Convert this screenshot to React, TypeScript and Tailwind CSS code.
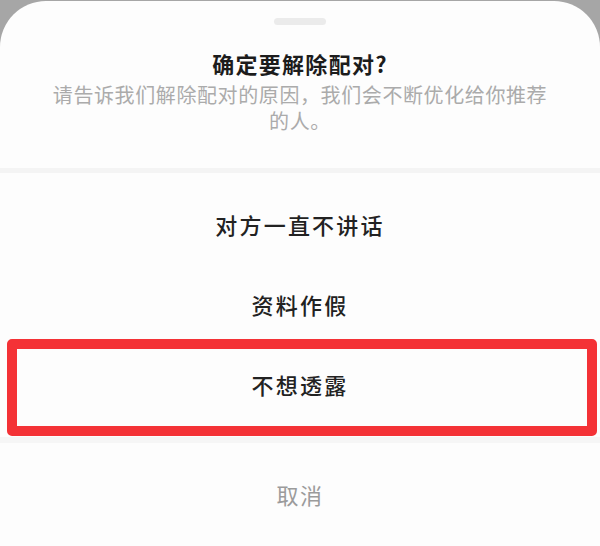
const reasons = ["对方一直不讲话", "资料作假", "不想透露"];

export default function App() {
  return (
    <div
      className="h-[546px] w-[600px] overflow-hidden bg-[#a6a6a6] pt-px"
      style={{ fontFamily: '"Noto Sans CJK SC", "Noto Sans", sans-serif' }}
    >
      <div className="flex h-full flex-col rounded-t-[46px] bg-[#fdfdfd]">
        {/* drag handle */}
        <div className="mx-auto mt-[17px] h-[7px] w-[52px] rounded-full bg-[#ebebeb]" />

        <div className="mt-[23px] text-center text-[22px] font-semibold leading-[30px] tracking-[1.3px] text-[#1c1c1c]">
          确定要解除配对?
        </div>
        <p className="mx-auto mt-[4px] w-[500px] text-center text-[20px] leading-[26px] tracking-[0.6px] text-[#ababab]">
          请告诉我们解除配对的原因，我们会不断优化给你推荐的人。
        </p>

        <div className="mt-[34px] h-[5px] bg-[#f4f4f4]" />

        <div className="mt-[11px] flex flex-col">
          {reasons.map((r, i) => (
            <div
              key={r}
              className="relative flex h-[80px] items-center justify-center text-[22px] font-medium tracking-[2.2px] text-[#222]"
            >
              {r}
              {i === 2 && (
                <div className="pointer-events-none absolute -top-[5px] -bottom-[12px] left-[7px] right-[3px] rounded-[5px] border-[10px] border-[#f43236]" />
              )}
            </div>
          ))}
        </div>

        <div className="mt-[13px] h-[6px] bg-[#f6f6f6]" />

        <div className="flex flex-1 items-center justify-center text-[22px] tracking-[1.5px] text-[#9b9b9b]">
          取消
        </div>
      </div>
    </div>
  );
}
